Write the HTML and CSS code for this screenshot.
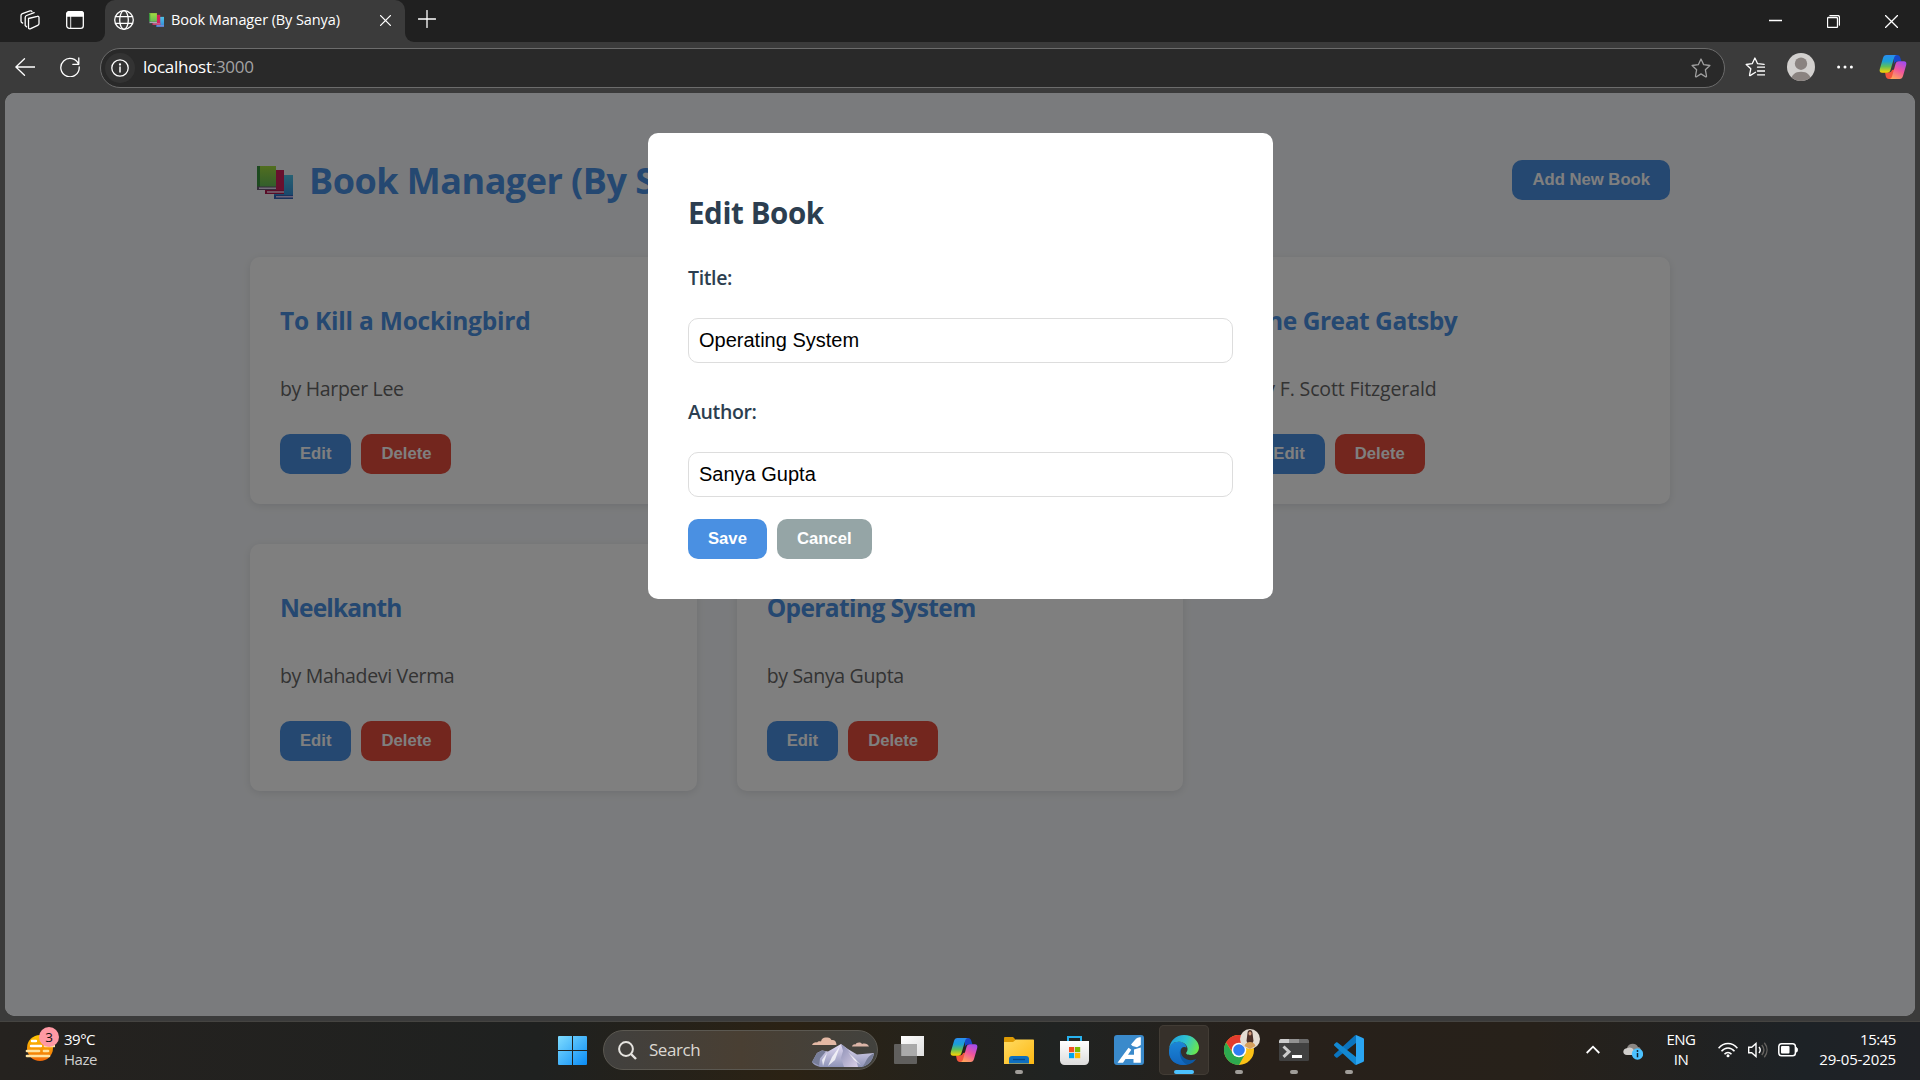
FILE: index.html
```html
<!DOCTYPE html>
<html lang="en">
<head>
<meta charset="utf-8">
<title>Book Manager (By Sanya)</title>
<link rel="stylesheet" href="styles.css">
</head>
<body>
<svg class="defs" width="0" height="0" aria-hidden="true">
  <defs>
    <linearGradient id="cpA" x1="0" y1="0" x2="0" y2="1"><stop offset="0" stop-color="#2a8df0"/><stop offset=".35" stop-color="#1a9fd8"/><stop offset=".65" stop-color="#5fbf5a"/><stop offset="1" stop-color="#ffd400"/></linearGradient>
    <linearGradient id="cpB" x1=".8" y1="0" x2=".3" y2="1"><stop offset="0" stop-color="#a04bf0"/><stop offset=".5" stop-color="#f0559c"/><stop offset="1" stop-color="#ffa45c"/></linearGradient>
    <linearGradient id="bkG" x1="0" y1="0" x2="0" y2="1"><stop offset="0" stop-color="#a3dc3f"/><stop offset="1" stop-color="#5bb85c"/></linearGradient>
    <linearGradient id="bkB" x1="0" y1="0" x2="0" y2="1"><stop offset="0" stop-color="#4fc3e8"/><stop offset="1" stop-color="#2f87d8"/></linearGradient>
    <linearGradient id="win" x1="0" y1="0" x2="1" y2="1"><stop offset="0" stop-color="#7fdcff"/><stop offset="1" stop-color="#0a8cf5"/></linearGradient>
    <linearGradient id="fold" x1="0" y1="0" x2="1" y2="1"><stop offset="0" stop-color="#ffdb62"/><stop offset="1" stop-color="#fdb813"/></linearGradient>
    <linearGradient id="edA" x1="0" y1=".3" x2="1" y2=".6"><stop offset="0" stop-color="#1f9de0"/><stop offset=".5" stop-color="#2fc3d0"/><stop offset="1" stop-color="#6be84a"/></linearGradient>
    <linearGradient id="edB" x1="0" y1="0" x2="0" y2="1"><stop offset="0" stop-color="#1b86d8"/><stop offset="1" stop-color="#1266bd"/></linearGradient>
    <linearGradient id="sun" x1="0" y1="0" x2="0" y2="1"><stop offset="0" stop-color="#ffc800"/><stop offset="1" stop-color="#f06a0a"/></linearGradient>
    <linearGradient id="mtA" x1="0" y1="0" x2="0" y2="1"><stop offset="0" stop-color="#e4dcf4"/><stop offset="1" stop-color="#8f94b8"/></linearGradient>
    <linearGradient id="mtB" x1="0" y1="0" x2="1" y2="1"><stop offset="0" stop-color="#8c8fb4"/><stop offset="1" stop-color="#d9cfe8"/></linearGradient>
    <linearGradient id="bag" x1="0" y1="0" x2="0" y2="1"><stop offset="0" stop-color="#fff"/><stop offset="1" stop-color="#dcdcdc"/></linearGradient>
    <linearGradient id="tv" x1="0" y1="0" x2="1" y2="1"><stop offset="0" stop-color="#fff"/><stop offset="1" stop-color="#dedede"/></linearGradient>
    <symbol id="copilot" viewBox="0 0 28 26">
      <path d="M15 1h3.200c1.500 0 2.500 1 3 2.500L22.500 7.500h-4c-1.800 0-3 .8-3.600 2.500z" fill="#1747c9"/>
      <path d="M13 25H9.800c-1.500 0-2.500-1-3-2.500L6 18.500h3.500c1.800 0 3-.8 3.600-2.500l4.900-1-2.200 7.500c-.5 1.500-1.300 2.500-2.800 2.500z" fill="#f2553d"/>
      <path d="M7.500 1H18c-1.500 0-2.300 1-2.800 2.500L11.500 16c-.6 1.800-1.500 2.700-3.500 2.700H3.200C1 18.700.2 17.200.8 15L4 4C4.600 2 5.500 1 7.500 1z" fill="url(#cpA)"/>
      <path d="M20.500 25H10.200c1.500 0 2.300-1 2.800-2.500L16.500 10c.6-1.800 1.500-2.700 3.500-2.700h4.800c2.200 0 3 1.500 2.400 3.700L24 22c-.6 2-1.500 3-3.500 3z" fill="url(#cpB)"/>
    </symbol>
    <symbol id="books" viewBox="0 0 36 33">
      <path d="M17 9h19v24H17z" fill="url(#bkB)"/><path d="M17 29h19v4H17z" fill="#3464b8"/><path d="M19 30h17v1.500H19z" fill="#d9c4f0"/>
      <path d="M8 4h19v24H8z" fill="#d3215c"/><path d="M8 24h19v4H8z" fill="#b01a50"/><path d="M10 25.200h17v1.500H10z" fill="#f0d0e6"/>
      <path d="M0 0h19v24H0z" fill="url(#bkG)"/><path d="M0 0h3v22H0z" fill="#3b943e"/><path d="M0 20.500h19V24H0z" fill="#6c5a78"/><path d="M2 21.500h17v1.400H2z" fill="#e6d8f2"/>
    </symbol>
  </defs>
</svg>

<header class="tabstrip">
  <div class="strip-left">
    <svg width="20" height="20" viewBox="0 0 20 20" class="line"><path d="M8.500 8.500 17.300 6.300c1-.3 1.700.2 1.700 1.200v6c0 1-.4 1.600-1.300 1.900l-7 3.300c-1.300.6-2.200 0-2.200-1.300zM5.200 14.800V7.500c0-1 .4-1.600 1.400-2l7.600-2.800M5.200 15.500l1.300 1.200M2.600 13c-1.200-.3-1.600-.8-1.600-2V5.600c0-1 .5-1.600 1.400-2L10 .9c1-.3 1.700 0 1.900.8"/></svg>
    <svg width="18" height="18" viewBox="0 0 18 18" class="line"><rect x=".7" y=".7" width="16.600" height="16.600" rx="2.600"/><path d="M.7 5V3A2.300 2.300 0 0 1 3 .7h12A2.300 2.300 0 0 1 17.300 3v2z" fill="#fff"/><path d="M4.600 5v12" opacity=".7"/></svg>
  </div>
  <div class="tab">
    <svg width="20" height="20" viewBox="0 0 20 20" class="line"><circle cx="10" cy="10" r="9.300"/><ellipse cx="10" cy="10" rx="4.300" ry="9.300"/><path d="M1.500 6.700h17M1.500 13.300h17"/></svg>
    <svg class="favicon" width="15" height="14"><use href="#books"/></svg>
    <span class="tab-title">Book Manager (By Sanya)</span>
    <svg class="tab-close line" width="11" height="11" viewBox="0 0 11 11"><path d="m.6.6 9.800 9.800M10.400.6.6 10.400"/></svg>
  </div>
  <div class="strip-right">
    <svg class="line" width="18" height="18" viewBox="0 0 18 18"><path d="M9 .5v17M.5 9h17"/></svg>
    <div class="window-controls">
      <svg width="13" height="13" viewBox="0 0 13 13" class="line"><path d="M0 5.500h13"/></svg>
      <svg width="13" height="13" viewBox="0 0 13 13" class="line"><rect x=".5" y="2.500" width="10" height="10" rx="1"/><path d="M3 .5h7.500a2 2 0 0 1 2 2V10"/></svg>
      <svg width="13" height="13" viewBox="0 0 13 13" class="line"><path d="m.4.400 12.200 12.200M12.600.4.4 12.600"/></svg>
    </div>
  </div>
</header>

<nav class="toolbar">
  <svg width="20" height="18" viewBox="0 0 20 18" class="line"><path d="M9.500.7.9 9l8.600 8.300M1 9h19"/></svg>
  <svg class="reload line" width="20" height="20" viewBox="0 0 20 20"><path d="M18.700 7.500A9.200 9.200 0 1 0 19.200 10M18.800 1v6.300h-6"/></svg>
  <div class="address">
    <span class="site-info"><svg width="18" height="18" viewBox="0 0 18 18" class="line"><circle cx="9" cy="9" r="8.200"/><path d="M9 8v5" stroke-width="1.500"/><circle cx="9" cy="5.500" r=".5" fill="#fff"/></svg></span>
    <span class="url"><span class="host">localhost</span>:3000</span>
    <svg class="add-fav line" width="20" height="20" viewBox="0 0 20 20"><path d="m10 1 2.700 5.700 6.200.8-4.500 4.300 1.100 6.200c.1.800-.3 1.100-1 .8L10 15.900l-4.500 2.900c-.7.300-1.100 0-1-.8l1.100-6.200L1.100 7.500l6.200-.8z"/></svg>
  </div>
  <div class="tools">
    <svg width="20" height="20" viewBox="0 0 20 20" class="line"><path d="M10.500 15.300 5.500 18.400c-.8.400-1.100.1-.9-.7l1.200-5.900L1.200 7.500l6-.8L9.900 1l2.700 5.700 6.500.7M12.500 10.200H20M12.500 14H20M12.500 17.800H20"/></svg>
    <svg width="28" height="28" viewBox="0 0 28 28"><clipPath id="av"><circle cx="14" cy="14" r="14"/></clipPath><g clip-path="url(#av)"><path d="M0 0h28v28H0z" fill="#d2d0ce"/><circle cx="14" cy="10.700" r="6.200" fill="#8a8380"/><path d="M4 28c0-6 4-9.300 10-9.300S24 22 24 28z" fill="#8a8380"/></g></svg>
    <svg width="16" height="4" viewBox="0 0 16 4" fill="#fff"><circle cx="1.600" cy="2" r="1.500"/><circle cx="8" cy="2" r="1.500"/><circle cx="14.400" cy="2" r="1.500"/></svg>
    <svg width="28" height="26"><use href="#copilot"/></svg>
  </div>
</nav>

<main class="viewport">
  <div class="app">
    <div class="app-header">
      <h1><svg width="36" height="33"><use href="#books"/></svg><span class="brand">Book Manager (By Sanya)</span></h1>
      <button class="btn primary">Add New Book</button>
    </div>
    <section class="grid">
      <article class="card"><h3>To Kill a Mockingbird</h3><p>by Harper Lee</p><div class="actions"><button class="btn primary">Edit</button><button class="btn danger">Delete</button></div></article>
      <article class="card"></article>
      <article class="card"><h3>The Great Gatsby</h3><p>by F. Scott Fitzgerald</p><div class="actions"><button class="btn primary">Edit</button><button class="btn danger">Delete</button></div></article>
      <article class="card"><h3>Neelkanth</h3><p>by Mahadevi Verma</p><div class="actions"><button class="btn primary">Edit</button><button class="btn danger">Delete</button></div></article>
      <article class="card"><h3>Operating System</h3><p>by Sanya Gupta</p><div class="actions"><button class="btn primary">Edit</button><button class="btn danger">Delete</button></div></article>
    </section>
  </div>
  <div class="overlay">
    <form class="modal">
      <h2>Edit Book</h2>
      <label for="title">Title:</label>
      <input id="title" type="text" value="Operating System">
      <label class="second" for="author">Author:</label>
      <input id="author" type="text" value="Sanya Gupta">
      <div class="actions"><button type="button" class="btn primary">Save</button><button type="button" class="btn muted">Cancel</button></div>
    </form>
  </div>
</main>

<footer class="taskbar">
  <div class="weather">
    <div class="weather-icon">
      <svg width="30" height="28" viewBox="0 0 30 28"><circle cx="15" cy="14" r="13" fill="url(#sun)"/><path d="M20 12h9M2 17h12M19 17h4M2 22h22" stroke="#ffe3a0" stroke-width="2.700" stroke-linecap="round"/><path d="M7 7h4M6 12h10" stroke="#fff" stroke-width="2.400" stroke-linecap="round"/></svg>
      <span class="badge">3</span>
    </div>
    <div class="weather-text"><span class="temp">39°C</span><span class="cond">Haze</span></div>
  </div>
  <div class="dock">
    <div class="slot"><svg width="29" height="29" viewBox="0 0 29 29"><path d="M1 0h13v14H0V1a1 1 0 0 1 1-1zM15 0h13a1 1 0 0 1 1 1v13H15zM0 15h14v14H1a1 1 0 0 1-1-1zM15 15h14v13a1 1 0 0 1-1 1H15z" fill="url(#win)"/></svg></div>
    <div class="search">
      <svg width="19" height="19" viewBox="0 0 19 19" fill="none" stroke="#e6e4e0" stroke-width="2"><circle cx="8" cy="8" r="6.900"/><path d="m13 13 5 5" stroke-width="2.400"/></svg>
      <span class="search-label">Search</span>
      <svg class="peaks" width="62" height="31" viewBox="0 0 62 31">
        <path d="M0 8c1-2 3-3 5-2.500C6 4 8 4 9 4.500 9.500 1.500 12 0 14.500.500 17 0 19 1.500 19.500 3c3-.5 5 1.500 5 5z" fill="#e3b8a4"/><path d="M40 9.500c.5-1.500 2-2.500 3.500-2 .5-2 5-3 6.500-.5C53 6 56 7 57 9.500z" fill="#dbb5a8"/>
        <path d="M0 25 5 16l5-2.500 6 1L29 7l6 4.500 10 6L62 16c-1 6-4 12-12 14H8c-4-1-7-3-8-5z" fill="url(#mtA)"/>
        <path d="m29 7 6 4.500 9 11 2 7.500H32l-3-9 2-7z" fill="url(#mtB)"/><path d="m0 25 5-9 5-2.500 4 1-6 7-1 7zM62 16c-1 6-4 12-12 14 5-5 3-9 12-14z" fill="#777d98"/>
        <path d="m28 9-8 11-4 9 7-6zM15 16l-5 7 1 6M36 15l6 8 7 5" fill="#fff" fill-opacity=".75"/>
      </svg>
    </div>
    <div class="slot"><svg width="30" height="28" viewBox="0 0 30 28"><path d="M7 0h23v20H7z" fill="url(#tv)"/><rect y="8" width="23" height="20" rx="1" fill="#777" fill-opacity=".72"/><path d="M8 8h15v12H8z" fill="#aaa"/></svg></div>
    <div class="slot"><svg width="28" height="26"><use href="#copilot"/></svg></div>
    <div class="slot"><svg width="30" height="27" viewBox="0 0 30 27"><path d="M0 1.200C0 .5.500 0 1.200 0H9l3 3v6H0z" fill="#dd9a04"/><path d="M0 5h9l3-2.500h17c.6 0 1 .4 1 1V27H0z" fill="url(#fold)"/><path d="M5 26.500V22c0-2 1-3 3-3h14c2 0 3 1 3 3v4.500z" fill="#0e6fc0"/><path d="M9 22.500h12" stroke="#07498a" stroke-width="1.300"/></svg><i class="run"></i></div>
    <div class="slot"><svg width="29" height="29" viewBox="0 0 29 29"><path d="M8 6V1h13v5" fill="none" stroke="#28b2ee" stroke-width="2"/><path d="M0 5h29v19.500c0 2.500-2 4.500-4.500 4.500h-20C2 29 0 27 0 24.500z" fill="url(#bag)"/><path d="M9 11h5.200v5.200H9z" fill="#f25022"/><path d="M15 11h5.200v5.200H15z" fill="#7fba00"/><path d="M9 17h5.200v5.200H9z" fill="#00a4ef"/><path d="M15 17h5.200v5.200H15z" fill="#ffb900"/></svg></div>
    <div class="slot"><svg width="30" height="30" viewBox="0 0 30 30"><rect width="30" height="30" rx="3" fill="#3a8acb"/><path d="M17 9.500 22 3.700Q24 1.800 26.800 2.300V10L23 12.300 18.500 11z" fill="#fff"/><path d="M20 14.500 26.800 12.500V27.700H19.500V24H11.500L9 27.700H3.500L14.500 12.700 17.300 14.800 14 19.800H20z" fill="#fff"/></svg></div>
    <div class="slot active"><svg width="30" height="30" viewBox="0 0 30 30"><path d="M0 15C0 20 2 30 15 30c6 0 10-2.500 12.300-6.300-3 1.700-6.300 2-9.800.5-5-2-6.500-7-5-11z" fill="#0c59a4"/><path d="M0 15C.7 9 5 6.800 9.500 6.800c4 0 7.500 2 8 5.700-3-1.700-6.500.5-6.700 4.500-.2 6 3 10.500 7 12.600C7 31.500-1 25 0 15z" fill="url(#edB)"/><path d="M0 14.500C.8 5.500 7 0 15 0c9 0 15 6.500 15 12.500 0 4.500-3.500 7.500-7.500 7.500-3.500 0-5.800-1-5.300-2.300.4-1 1.600-1.700 1.300-4.200C18 9.500 14 6.800 9.500 6.800 5 6.800 1 9.500 0 14.500z" fill="url(#edA)"/></svg><i class="run"></i></div>
    <div class="slot"><svg width="30" height="30" viewBox="0 0 30 30"><circle cx="15" cy="15" r="15" fill="#fbc116"/><path d="M15 8h13.300A15 15 0 0 0 2 7.500L9 18z" fill="#e33b2e"/><path d="M2 7.500A15 15 0 0 0 15 30l6.400-11.500L9 18.500z" fill="#2da94f"/><circle cx="15" cy="15" r="7.300" fill="#fff"/><circle cx="15" cy="15" r="5.800" fill="#2f7df4"/></svg>
      <svg class="profile" width="20" height="20" viewBox="0 0 20 20"><circle cx="10" cy="10" r="10" fill="#e4dcd2"/><path d="M7.500 4c0-4 5-4 5 0l1 8-2 4H8.500l-2-4z" fill="#4c3028"/><ellipse cx="10" cy="4.500" rx="1.500" ry="2" fill="#d19b7a"/><path d="M4.500 17c1-3 3-4 5.500-4s4.500 1 5.500 4L10 20z" fill="#d6a15e"/></svg><i class="run"></i></div>
    <div class="slot"><svg width="30" height="22" viewBox="0 0 30 22"><rect width="30" height="22" rx="1.500" fill="#414141"/><path d="M1.500 0H10v4H0V1.500z" fill="#ccc"/><path d="M10 0h10v4H10z" fill="#929292"/><path d="M20 0h8.500L30 1.500V4H20z" fill="#6b6b6b"/><path d="m4.500 7.500 5.500 5.200-5.500 5.200" fill="none" stroke="#ccc" stroke-width="3"/><path d="M13 16h10v3H13z" fill="#fff"/></svg><i class="run"></i></div>
    <div class="slot"><svg width="30" height="30" viewBox="0 0 30 30"><path d="M22 0v8L3.500 22.500c-.5.400-1 .4-1.500 0L.400 21c-.6-.5-.5-1.200 0-1.700L20.500.7c.5-.4 1-.7 1.500-.7z" fill="#0b74be"/><path d="M22 30v-8L3.500 7.500C3 7.100 2.500 7.100 2 7.500L.400 9c-.6.500-.5 1.200 0 1.700l20.100 18.600c.5.400 1 .7 1.500.7z" fill="#1388d2"/><path d="m22 0 7 3c.7.300 1 .8 1 1.500v21c0 .7-.3 1.200-1 1.500l-7 3z" fill="#2aa5f2"/></svg><i class="run"></i></div>
  </div>
  <div class="tray">
    <svg class="chev" width="14" height="9" viewBox="0 0 14 9" fill="none" stroke="#fff" stroke-width="1.800"><path d="m.7 8 6.300-6.300L13.300 8"/></svg>
    <svg class="cloud" width="20" height="18" viewBox="0 0 20 18"><path d="M4 6c1-5 9-6 11-1 4 0 4 8 0 8H5z" fill="#8b8784"/><path d="M4.500 6C7 4.500 10 6 11 8.500V13H4C-1 13-1 6.500 4.500 6z" fill="#d0cecb"/><circle cx="14.500" cy="12" r="5.700" fill="#4cc2ff"/><path d="M14.500 11v4.300" stroke="#10222d" stroke-width="1.500"/><circle cx="14.500" cy="9" r=".9" fill="#10222d"/></svg>
    <div class="lang"><span class="eng">ENG</span><span class="in">IN</span></div>
    <svg width="20" height="16" viewBox="0 0 20 16" fill="none" stroke="#fff" stroke-width="1.500"><path d="M.6 6.200c5.300-6.300 13.500-6.300 18.800 0M3.500 9.200c3.700-4.400 9.300-4.400 13 0M6.500 12.200c2-2.400 5-2.400 7 0"/><circle cx="10" cy="13.800" r="1.500" fill="#fff" stroke="none"/></svg>
    <svg width="20" height="16" viewBox="0 0 20 16" fill="none" stroke="#fff" stroke-width="1.400"><path d="M.7 5.300h3L8 1.500v13l-4.300-3.800h-3z"/><path d="M11 5c1.400 1.700 1.400 4.300 0 6"/><path d="M13.800 3c2.500 3 2.500 7 0 10M16.300.8c3.600 4.400 3.600 10 0 14.400" stroke="#65625f"/></svg>
    <svg width="20" height="14" viewBox="0 0 20 14"><rect x=".8" y=".8" width="16.600" height="12" rx="2.800" fill="none" stroke="#fff" stroke-width="1.500"/><rect x="3" y="3" width="8.500" height="7.600" rx="1" fill="#fff"/><path d="M18 4.500c2 0 2 4.600 0 4.600z" fill="#fff" stroke="#fff"/></svg>
    <div class="clock"><span class="time">15:45</span><span class="date">29-05-2025</span></div>
  </div>
</footer>
</body>
</html>
```
FILE: styles.css
```css
* { box-sizing: border-box; }
body {
  margin: 0;
  width: 1920px;
  height: 1080px;
  overflow: hidden;
  display: flex;
  flex-direction: column;
  background: #3b3b3b;
  color: #fff;
  font-family: "Open Sans", "Noto Sans", sans-serif;
}
svg { display: block; flex: none; }
.defs { position: absolute; }
.line { fill: none; stroke: #fff; stroke-width: 1.3; stroke-linecap: round; stroke-linejoin: round; }
h1, h2, h3, p { margin: 0; }

/* Tab strip */
.tabstrip { display: flex; height: 42px; flex: none; }
.strip-left, .strip-right { display: flex; background: #202020; }
.strip-left { align-items: center; gap: 26px; width: 105px; padding: 0 0 2px 20px; border-bottom-right-radius: 9px; }
.strip-right { flex: 1; justify-content: space-between; align-items: flex-start; padding: 10px 22px 0 13px; border-bottom-left-radius: 9px; }
.tab { display: flex; align-items: center; width: 300px; padding: 0 14px 2px 9px; background: linear-gradient(#202020, #202020) 0 0 / 10px 10px no-repeat, linear-gradient(#202020, #202020) 100% 0 / 10px 10px no-repeat; position: relative; z-index: 0; }
.tab::before { content: ""; position: absolute; inset: 0; z-index: -1; background: #3b3b3b; border-radius: 10px 10px 0 0; }
.favicon { margin-left: 15px; }
.tab-title { margin-left: 7px; font-size: 14.500px; line-height: 20px; letter-spacing: -.1px; white-space: nowrap; }
.tab-close { margin: 1px 0 0 auto; }
.window-controls { display: flex; gap: 45px; margin-top: 5px; }

/* Address bar */
.toolbar { display: flex; align-items: center; flex: none; height: 51px; padding: 0 13px 1px 15px; }
.reload { margin-left: 25px; }
.address { display: flex; align-items: center; width: 1625px; height: 40px; margin: 1px 0 0 20px; padding: 0 13px 0 4px; border: 1px solid #6c6c6c; border-radius: 20px; background: #292929; }
.site-info { display: flex; align-items: center; justify-content: center; width: 30px; height: 30px; border-radius: 50%; background: #333; }
.url { margin: -2px 0 0 8px; font-size: 17px; line-height: 24px; letter-spacing: -.28px; color: #a3a3a3; }
.host { color: #fff; }
.add-fav { margin-left: auto; stroke: #a0a0a0; }
.tools { display: flex; align-items: center; margin-left: auto; gap: 22px; }
.tools svg:last-child { margin-left: 4px; }

/* Page */
.viewport { position: relative; height: 923px; flex: none; margin: 0 5px; border-radius: 10px; overflow: hidden; background: #f5f7fa; }
.app { width: 1420px; margin-left: 245px; padding-top: 67px; }
.app-header { display: flex; justify-content: space-between; align-items: flex-start; height: 97px; }
h1 { display: flex; align-items: center; padding: 5px 0 0 7px; color: #4a90e2; font-size: 36px; line-height: 44px; font-weight: 700; }
h1 svg { margin-bottom: 4px; }
.brand { width: 345px; margin: -6px 0 0 16px; overflow: hidden; letter-spacing: -.52px; white-space: nowrap; }
.grid { display: grid; grid-template-columns: repeat(3, 1fr); gap: 40px; }
.card { height: 247px; padding: 44px 30px 30px; border-radius: 10px; background: #fff; box-shadow: 0 2px 8px rgba(0, 0, 0, .1); }
.card h3 { color: #4a90e2; font-size: 24.500px; line-height: 40px; letter-spacing: -.45px; }
.card p { margin-top: 33px; color: #666; font-size: 19.500px; line-height: 30px; letter-spacing: -.33px; }
.card:nth-child(1) h3 { letter-spacing: -.22px; }
.card:nth-child(4) h3 { letter-spacing: -.85px; }
.card:nth-child(5) h3 { letter-spacing: -.6px; }
.card:nth-child(3) p { letter-spacing: -.13px; }
.actions { display: flex; gap: 10px; margin-top: 30px; }
.btn { height: 40px; padding: 0 20px; border: 0; border-radius: 10px; color: #fff; font: 700 16.667px "Liberation Sans", Arial, sans-serif; }
.primary { background: #4a90e2; }
.danger { background: #e74c3c; }
.muted { background: #95a5a6; }

/* Edit dialog */
.overlay { position: absolute; inset: 0; background: rgba(0, 0, 0, .5); }
.modal { width: 625px; height: 466px; margin: 40px 0 0 643px; padding: 60px 40px 40px; border-radius: 10px; background: #fff; color: #2c3e50; }
.modal h2 { font-size: 29.500px; line-height: 40px; letter-spacing: -.4px; }
.modal label { display: block; margin: 30px 0 25px; font-size: 19.500px; line-height: 30px; font-weight: 600; letter-spacing: -.35px; }
.modal .second { margin-top: 34px; }
.modal input { display: block; width: 545px; height: 45px; padding: 0 10px; border: 1px solid #ddd; border-radius: 10px; background: #fff; color: #000; font: 20px "Liberation Sans", Arial, sans-serif; }
.modal .actions { margin-top: 22px; }

/* Taskbar */
.taskbar { display: flex; height: 59px; margin-top: auto; background: linear-gradient(90deg, #25221f, #1f2120 28%, #2b2214 41%, #202322 55%, #27201a 66%, #27211a 80%, #1d2226 94%, #202226); border-top: 1px solid #454441; font-size: 15px; line-height: 20px; }
.weather { display: flex; width: 547px; padding: 7px 0 0 25px; }
.weather-icon { position: relative; width: 30px; padding-top: 5px; }
.badge { position: absolute; left: 14px; top: -2px; width: 20px; height: 20px; border-radius: 50%; background: #ff99a4; color: #111; font-size: 13.500px; text-align: center; }
.weather-text, .lang, .clock { display: flex; flex-direction: column; }
.weather-text { margin-left: 9px; letter-spacing: -.5px; }
.cond { color: #cfcfcf; }
.dock { display: flex; align-items: center; gap: 5px; padding-bottom: 1px; }
.slot { position: relative; display: flex; align-items: center; justify-content: center; width: 50px; height: 50px; margin-top: -1px; border-radius: 5px; }
.active { background: #36302a; box-shadow: inset 0 0 0 1px #423c35; }
.run { position: absolute; bottom: 1px; left: 21px; width: 8px; height: 4px; border-radius: 2px; background: #a09d99; }
.active .run { left: 15px; width: 20px; background: #4cc2ff; }
.profile { position: absolute; left: 26px; top: 4px; }
.search { display: flex; align-items: center; width: 275px; height: 40px; margin: -1px 1px 0; padding: 0 3px 0 14px; border: 1px solid #5b5851; border-radius: 20px; background: linear-gradient(90deg, #41403e, #493f33 50%, #42423e); }
.search-label { margin: -1px 0 0 12px; font-size: 17px; letter-spacing: -.45px; color: #dcd8d2; }
.peaks { margin: 4px 0 0 auto; }
.tray { display: flex; align-items: center; margin-left: auto; padding: 0 24px 3px 0; gap: 10px; }
.chev { margin-right: 13px; }
.cloud { margin: 2px 14px 0 0; }
.lang, .clock { margin-top: -2px; }
.lang { width: 28px; margin-right: 13px; align-items: center; letter-spacing: -.5px; }
.clock { width: 88px; align-items: flex-end; letter-spacing: -.15px; }
.time { letter-spacing: -.45px; }
```
